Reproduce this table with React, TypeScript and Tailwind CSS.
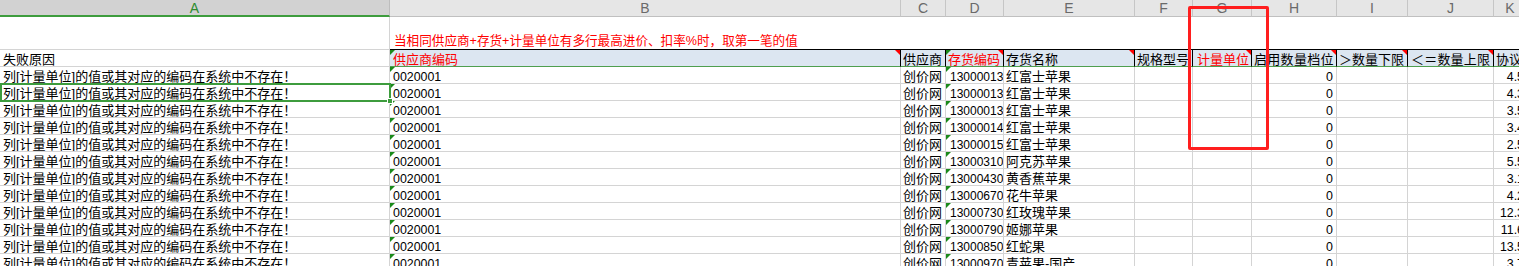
import React from "react";

const codes = ["13000013","13000013","13000013","13000014","13000015","13000310","13000430","13000670","13000730","13000790","13000850","13000970"];
const names = ["红富士苹果","红富士苹果","红富士苹果","红富士苹果","红富士苹果","阿克苏苹果","黄香蕉苹果","花牛苹果","红玫瑰苹果","姬娜苹果","红蛇果","青苹果-国产"];
const kvals = ["4.5","4.3","3.5","3.4","2.5","5.5","3.1","4.2","12.3","11.6","13.5","3.7"];

type CP = { children?: React.ReactNode; r?: string; b?: string; cls?: string; h?: string };
function C({ children, r = "border-r-[#d4d4d4]", b = "border-b-[#d4d4d4]", cls = "", h = "h-[17px]" }: CP) {
  return (
    <div className={`relative overflow-hidden whitespace-nowrap flex items-end border-r border-b leading-[12px] ${r} ${b} ${h} ${cls}`}>
      {children}
    </div>
  );
}

function GreenTri() {
  return <span className="absolute left-0 top-0 w-0 h-0 border-t-[5px] border-t-[#1a8a1a] border-r-[5px] border-r-transparent" />;
}
function RedTri() {
  return <span className="absolute right-0 top-0 w-0 h-0 border-t-[5px] border-t-[#ff0000] border-l-[5px] border-l-transparent" />;
}

const letters = ["A","B","C","D","E","F","G","H","I","J","K"];

export default function App() {
  const HB = "border-r-black";
  const HBB = "border-b-[#4f9f4f]";
  const HBG = "bg-[#dce6f1]";
  return (
    <div className="relative w-[1519px] h-[266px] overflow-hidden bg-white text-black text-[13px] font-['Liberation_Sans','Noto_Sans_CJK_SC',sans-serif]">
      <div className="grid grid-cols-[390px_511px_45px_58px_131px_58px_59px_85px_71px_86px_33px]">
        {/* column letters */}
        {letters.map((l, i) => (
          <div
            key={l}
            className={
              i === 0
                ? "h-[17px] flex items-center justify-center bg-[#d2d2d2] border-r border-r-[#bdbdbd] border-b-2 border-b-[#3d9c3d] text-[#2e8b2e] text-[14px] leading-none"
                : "h-[17px] flex items-center justify-center bg-[#e6e6e6] border-r border-r-[#c6c6c6] border-b border-b-[#c0c0c0] text-[#6a6a6a] text-[14px] leading-none overflow-hidden"
            }
          >
            {l}
          </div>
        ))}

        {/* row 1 */}
        <C h="h-[33px]" />
        <div className="col-span-10 h-[33px] border-b border-b-black flex items-end overflow-hidden whitespace-nowrap">
          <span className="pl-[4px] pb-[2px] text-[12.6px] leading-[12px] text-[#ff0000]">
            当相同供应商+存货+计量单位有多行最高进价、扣率%时，取第一笔的值
          </span>
        </div>

        {/* row 2 header */}
        <C cls="pl-[3px]">失败原因</C>
        <C r={HB} b={HBB} cls={`${HBG} pl-[3px] text-[#ff0000]`}><GreenTri /><RedTri />供应商编码</C>
        <C r={HB} b={HBB} cls={`${HBG} pl-[2px]`}>供应商</C>
        <C r={HB} b={HBB} cls={`${HBG} pl-[2px] text-[#ff0000]`}><GreenTri /><RedTri />存货编码</C>
        <C r={HB} b={HBB} cls={`${HBG} pl-[2px]`}><RedTri />存货名称</C>
        <C r={HB} b={HBB} cls={`${HBG} pl-[2px]`}>规格型号</C>
        <C r={HB} b={HBB} cls={`${HBG} pl-[4px] text-[#ff0000]`}><RedTri />计量单位</C>
        <C r={HB} b={HBB} cls={`${HBG} pl-[2px] tracking-[0.3px]`}><RedTri />启用数量档位</C>
        <C r={HB} b={HBB} cls={`${HBG} pl-[2px]`}><RedTri />＞数量下限</C>
        <C r={HB} b={HBB} cls={`${HBG} pl-[3px] tracking-[0.2px]`}><RedTri />＜＝数量上限</C>
        <C r={HB} b={HBB} cls={`${HBG} pl-[2px]`}>协议价</C>

        {codes.map((code, i) => (
          <React.Fragment key={i}>
            <C cls="pl-[3px]">列[计量单位]的值或其对应的编码在系统中不存在！</C>
            <C cls="pl-[3px] text-[12.4px]"><GreenTri />0020001</C>
            <C cls="pl-[2px]">创价网</C>
            <C cls="pl-[4px] text-[12px]"><GreenTri />{code}</C>
            <C cls="pl-[2px]">{names[i]}</C>
            <C />
            <C />
            <C cls="justify-end pr-[3px] text-[12.4px]">0</C>
            <C />
            <C />
            <C cls="justify-end pr-[2px] text-[12.4px]">{kvals[i]}</C>
          </React.Fragment>
        ))}
      </div>

      {/* selection box around A4 */}
      <div className="absolute left-0 top-[83px] w-[391px] h-[19px] border-2 border-[#3d9c3d] pointer-events-none" />
      <div className="absolute left-[387px] top-[98px] w-[6px] h-[6px] bg-[#3d9c3d] border border-white pointer-events-none" />

      {/* red annotation rectangle */}
      <div className="absolute left-[1188px] top-[6px] w-[81px] h-[144px] border-[3px] border-[#ff1e1e] rounded-[2px] pointer-events-none" />
    </div>
  );
}
